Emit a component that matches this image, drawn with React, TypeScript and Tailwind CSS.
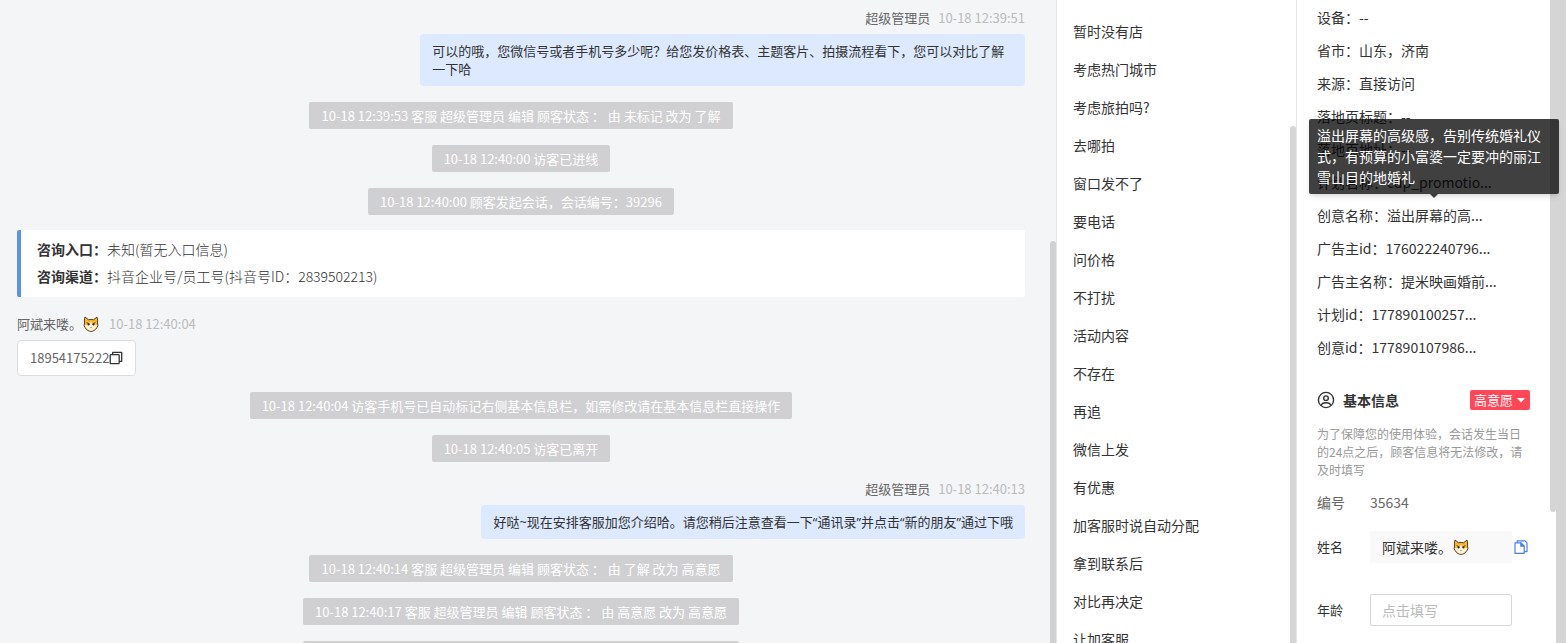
import React from 'react';

const quickReplies = [
  '暂时没有店',
  '考虑热门城市',
  '考虑旅拍吗?',
  '去哪拍',
  '窗口发不了',
  '要电话',
  '问价格',
  '不打扰',
  '活动内容',
  '不存在',
  '再追',
  '微信上发',
  '有优惠',
  '加客服时说自动分配',
  '拿到联系后',
  '对比再决定',
  '让加客服',
];

const visitInfo: [string, string][] = [
  ['设备', '--'],
  ['省市', '山东，济南'],
  ['来源', '直接访问'],
  ['落地页标题', '--'],
  ['落地页地址', '--'],
  ['计划名称', 'cdp_promotio...'],
  ['创意名称', '溢出屏幕的高...'],
  ['广告主id', '176022240796...'],
  ['广告主名称', '提米映画婚前...'],
  ['计划id', '177890100257...'],
  ['创意id', '177890107986...'],
];

function CatFace() {
  return (
    <svg viewBox="0 0 32 32" className="ml-px size-4 shrink-0" aria-label="猫" role="img">
      <path
        d="M4 2 L11 7.500 Q16 6 21 7.500 L28 2 Q30 8 29 14 Q31 19 28 23.500 Q22 31 16 31 Q10 31 4 23.500 Q1 19 3 14 Q2 8 4 2Z"
        fill="#ffb52a"
        stroke="#3a3026"
        strokeWidth="1.800"
        strokeLinejoin="round"
      />
      <path d="M4 18 Q8 16.500 12 19 Q14.500 15 16 10 Q17.500 15 20 19 Q24 16.500 28 18 Q28.500 21 26 23.800 Q21 29.800 16 29.800 Q11 29.800 6 23.800 Q3.500 21 4 18Z" fill="#fff1d6" />
      <path d="M8 13.500 L13 16.500 M24 13.500 L19 16.500" stroke="#2b2622" strokeWidth="1.800" strokeLinecap="round" />
      <ellipse cx="10.800" cy="17" rx="1.700" ry="2" fill="#2b2622" />
      <ellipse cx="21.200" cy="17" rx="1.700" ry="2" fill="#2b2622" />
      <path d="M14.500 22 h3 l-1.500 2z" fill="#5a3a2a" />
    </svg>
  );
}

function SystemNote({ children }: { children: React.ReactNode }) {
  return (
    <p className="mb-4 self-center rounded-xs bg-[#d0d0d2] px-3 py-1 text-[13px] leading-[19px] text-white">
      {children}
    </p>
  );
}

function AgentMessage({ time, children }: { time: string; children: React.ReactNode }) {
  return (
    <article className="mb-4 flex max-w-[60%] flex-col items-end self-end text-[13px]">
      <header className="mb-[5px] flex gap-2 leading-[22px]">
        <span className="text-[#666]">超级管理员</span>
        <time className="text-[#bbb]">{time}</time>
      </header>
      <p className="rounded-sm bg-[#dce9ff] px-3 py-2 font-['Open_Sans','Noto_Sans_CJK_SC',sans-serif] leading-[18px] text-[#333]">
        {children}
      </p>
    </article>
  );
}

function InfoRow({ label, value, tip }: { label: string; value: string; tip?: string }) {
  return (
    <li className="relative h-[33px] whitespace-nowrap leading-[33px]">
      {label}：{value}
      {tip && (
        <div
          role="tooltip"
          className="absolute bottom-full -left-2 z-10 mb-[5px] w-[250px] whitespace-normal rounded-xs bg-black/75 px-2 py-1.5 leading-[21px] text-white shadow-md"
        >
          {tip}
          <svg viewBox="0 0 8 4" className="absolute top-full left-1/2 h-1 w-2 -translate-x-1/2">
            <path d="M0 0h8L4 4z" fill="#000" fillOpacity="0.75" />
          </svg>
        </div>
      )}
    </li>
  );
}

export default function App() {
  return (
    <div className="flex h-screen overflow-hidden bg-[#d5d5d5] pr-2.5 font-['Noto_Sans_CJK_SC',sans-serif] text-sm text-[#333]">
      <main className="relative flex min-w-0 flex-1 flex-col bg-[#f4f5f7] pt-[7px] pr-[31px] pl-[17px]">
        <AgentMessage time="10-18 12:39:51">
          可以的哦，您微信号或者手机号多少呢？给您发价格表、主题客片、拍摄流程看下，您可以对比了解一下哈
        </AgentMessage>
        <SystemNote>10-18 12:39:53 客服 超级管理员 编辑 顾客状态 ： 由 未标记 改为 了解</SystemNote>
        <SystemNote>10-18 12:40:00 访客已进线</SystemNote>
        <SystemNote>10-18 12:40:00 顾客发起会话，会话编号：39296</SystemNote>
        <section className="-mt-px mb-4 rounded-xs border-l-4 border-[#5b8ff0] bg-white px-4 pt-1.5 pb-[7px] leading-[27px]">
          <p>
            <b>咨询入口：</b>
            <span className="font-light">未知(暂无入口信息)</span>
          </p>
          <p>
            <b>咨询渠道：</b>
            <span className="font-light">抖音企业号/员工号(抖音号ID：2839502213)</span>
          </p>
        </section>
        <article className="mb-4 flex flex-col items-start text-[13px]">
          <header className="mb-[5px] flex items-center leading-[22px]">
            <span className="text-[#666]">阿斌来喽。</span>
            <CatFace />
            <time className="ml-2.5 text-[#bbb]">10-18 12:40:04</time>
          </header>
          <div className="flex items-center rounded-sm border border-[#ddd] bg-white px-3 py-2 leading-[18px] text-[#666]">
            18954175222
            <button type="button" aria-label="复制手机号">
              <svg viewBox="0 0 14 14" className="size-3.5" fill="none" stroke="#333" strokeWidth="1.300">
                <rect x="1.200" y="3.700" width="9" height="9" rx="0.800" />
                <path d="M3.700 3.700V1.300H12.700V10.300H10.200" strokeLinejoin="round" />
              </svg>
            </button>
          </div>
        </article>
        <SystemNote>10-18 12:40:04 访客手机号已自动标记右侧基本信息栏，如需修改请在基本信息栏直接操作</SystemNote>
        <SystemNote>10-18 12:40:05 访客已离开</SystemNote>
        <AgentMessage time="10-18 12:40:13">
          好哒~现在安排客服加您介绍哈。请您稍后注意查看一下“通讯录”并点击“新的朋友”通过下哦
        </AgentMessage>
        <SystemNote>10-18 12:40:14 客服 超级管理员 编辑 顾客状态 ： 由 了解 改为 高意愿</SystemNote>
        <SystemNote>10-18 12:40:17 客服 超级管理员 编辑 顾客状态 ： 由 高意愿 改为 高意愿</SystemNote>
        <SystemNote>10-18 12:40:18 客服 超级管理员 编辑 顾客状态 ： 由 高意愿 改为 高意愿</SystemNote>
        <div className="absolute top-[241px] right-0 bottom-0 w-1.5 rounded-t-full bg-[#d0d1d2]" />
      </main>

      <nav className="relative w-60 shrink-0 border-l border-[#e6e6e8] bg-white pt-3 pl-4">
        <ul>
          {quickReplies.map((reply) => (
            <li key={reply} className="h-[38px]">
              <button type="button" className="leading-[38px]">
                {reply}
              </button>
            </li>
          ))}
        </ul>
        <div className="absolute top-[126px] right-0 bottom-0 w-1.5 rounded-t-full bg-[#d5d5d5]" />
      </nav>

      <aside className="relative w-[260px] shrink-0 border-l border-[#e6e6e8] bg-white pt-px pr-[26px] pl-5">
        <ul>
          {visitInfo.map(([label, value]) => (
            <InfoRow
              key={label}
              label={label}
              value={value}
              tip={
                label === '创意名称'
                  ? '溢出屏幕的高级感，告别传统婚礼仪式，有预算的小富婆一定要冲的丽江雪山目的地婚礼'
                  : undefined
              }
            />
          ))}
        </ul>
        <section className="mt-[26px]">
          <header className="flex h-5 items-center">
            <svg viewBox="0 0 18 18" className="size-[18px]" fill="none" stroke="#333" strokeWidth="1.400">
              <circle cx="9" cy="9" r="7.600" />
              <circle cx="9" cy="7.200" r="2.300" />
              <path d="M4.200 14.600C4.600 12.600 6.400 11.700 9 11.700s4.400 .9 4.800 2.900" />
            </svg>
            <h2 className="ml-2 font-bold leading-5">基本信息</h2>
            <button
              type="button"
              className="ml-auto flex h-5 w-15 items-center justify-between rounded-xs bg-[#ff4757] px-1 text-[13px] leading-5 text-white"
            >
              高意愿
              <svg viewBox="0 0 10 10" className="size-2.5" fill="#fff">
                <path d="M1 3h8L5 7.500z" />
              </svg>
            </button>
          </header>
          <p className="mt-[15px] text-xs leading-[18px] text-[#999]">
            为了保障您的使用体验，会话发生当日的24点之后，顾客信息将无法修改，请及时填写
          </p>
          <dl className="mt-3 flex leading-[22px] text-[#666]">
            <dt className="w-[53px]">编号</dt>
            <dd>35634</dd>
          </dl>
          <div className="mt-[18px] flex h-8 items-center">
            <span className="w-[53px] text-[13px]">姓名</span>
            <div className="flex h-8 w-[142px] items-center bg-[#f9f9fa] px-3">
              阿斌来喽。
              <CatFace />
            </div>
            <button type="button" aria-label="复制姓名" className="ml-0.5">
              <svg viewBox="0 0 14 14" className="size-3.5" fill="none" stroke="#4a80f0" strokeWidth="1.200" strokeLinejoin="round">
                <path d="M1 2.800H6.800L10.200 6.200V13.400H1Z" />
                <path d="M6.800 2.800V6.200H10.200Z" fill="#4a80f0" />
                <path d="M3.200 2.600V.8H11L13 2.800V11.600H10.400" />
              </svg>
            </button>
          </div>
          <div className="mt-[31px] flex h-8 items-center">
            <label htmlFor="age" className="w-[53px] text-[13px]">
              年龄
            </label>
            <input
              id="age"
              placeholder="点击填写"
              className="h-8 w-[142px] rounded-xs border border-[#d5d5d8] bg-white px-[11px] placeholder:text-[#bbb]"
            />
          </div>
        </section>
        <div className="absolute top-0 right-0 h-[512px] w-1.5 rounded-b-full bg-[#d5d5d5]" />
      </aside>
    </div>
  );
}
